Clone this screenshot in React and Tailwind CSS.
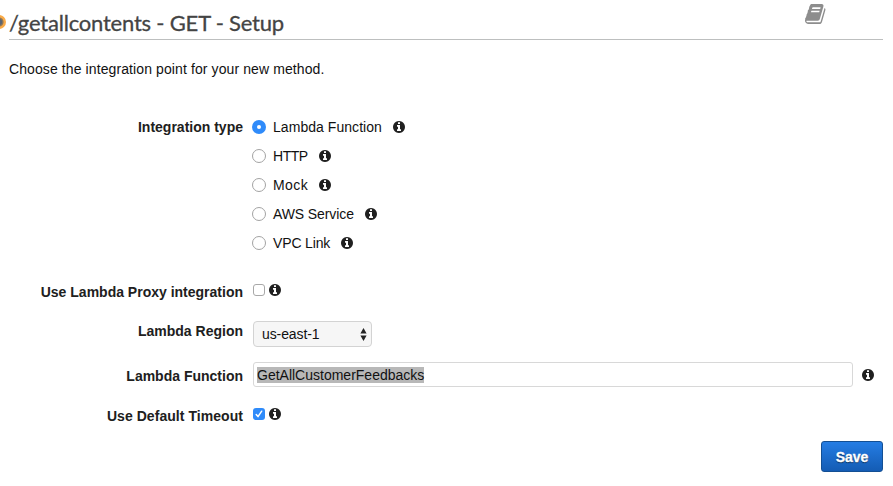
const InfoIcon = ({ className = '' }) => (
  <svg viewBox="128 128 1536 1536" className={`h-3 w-3 shrink-0 text-[#202020] ${className}`} fill="currentColor" aria-hidden="true">
    <path d="M1152 1376v-160q0-14-9-23t-23-9h-96v-512q0-14-9-23t-23-9h-320q-14 0-23 9t-9 23v160q0 14 9 23t23 9h96v320h-96q-14 0-23 9t-9 23v160q0 14 9 23t23 9h448q14 0 23-9t9-23zm-128-896v-160q0-14-9-23t-23-9h-192q-14 0-23 9t-9 23v160q0 14 9 23t23 9h192q14 0 23-9t9-23zm640 416q0 209-103 385.500t-279.500 279.500-385.500 103-385.500-103-279.500-279.500-103-385.500 103-385.500 279.500-279.500 385.500-103 385.500 103 279.500 279.500 103 385.500z" />
  </svg>
)

const BookIcon = () => (
  <svg viewBox="0 128 1792 1536" preserveAspectRatio="none" className="h-5 w-[22px]" fill="#8d8d8d" aria-hidden="true">
    <path d="M1639 478q40 57 18 129l-275 906q-19 64-76.500 107.500t-122.500 43.500h-923q-77 0-148.500-53.500t-99.500-131.500q-24-67-2-127 0-4 3-27t4-37q1-8-3-21.500t-3-19.500q2-11 8-21t16.500-23.500 16.500-23.500q23-38 45-91.500t30-91.500q3-10 .5-30t-.5-28q3-11 17-28t17-23q21-36 42-92t25-90q1-9-2.500-32t.5-28q4-13 22-30.500t22-22.500q19-26 42.500-84.500t27.500-96.500q1-8-3-25.500t-2-26.500q2-8 9-18t18-23 17-21q8-12 16.500-30.500t15-35 16-36 19.500-32 26.500-23.500 36-11.500 47.500 5.500l-1 3q38-9 51-9h761q74 0 114 56t18 130l-274 906q-36 119-71.500 153.500t-128.500 34.500h-869q-27 0-38 15-11 16-1 43 24 70 144 70h923q29 0 56-15.500t35-41.500l300-987q7-22 5-57 38 15 59 43zm-1064 2q-4 13 2 22.500t20 9.500h608q13 0 25.500-9.500t16.500-22.500l21-64q4-13-2-22.500t-20-9.500h-608q-13 0-25.500 9.500t-16.500 22.500zm-83 256q-4 13 2 22.500t20 9.500h608q13 0 25.500-9.500t16.500-22.500l21-64q4-13-2-22.500t-20-9.500h-608q-13 0-25.500 9.500t-16.500 22.500z" />
  </svg>
)

const Radio = ({ checked }) =>
  checked ? (
    <span className="flex h-3.5 w-3.5 shrink-0 items-center justify-center rounded-full bg-[#2f8bfa]">
      <span className="h-1 w-1 rounded-full bg-white" />
    </span>
  ) : (
    <span className="h-3.5 w-3.5 shrink-0 rounded-full border border-[#a3a3a3] bg-white" />
  )

const Checkbox = ({ checked }) =>
  checked ? (
    <span className="flex h-3 w-3 shrink-0 items-center justify-center rounded-[3px] bg-[#2f8bfa]">
      <svg viewBox="0 0 12 12" className="h-3 w-3" fill="none" stroke="white" strokeWidth="1.5" strokeLinecap="round" strokeLinejoin="round">
        <path d="M3.2 6.5 5 8.6 8.7 3.2" />
      </svg>
    </span>
  ) : (
    <span className="h-3 w-3 shrink-0 rounded-[3px] border border-[#a8a8a8] bg-white" />
  )

const Label = ({ children, className = '' }) => (
  <div className={`w-[243px] shrink-0 text-right font-bold whitespace-nowrap text-[#202020] ${className}`}>{children}</div>
)

const types = [
  { name: 'Lambda Function', tracking: 'tracking-[0.05px]' },
  { name: 'HTTP', tracking: 'tracking-[-0.45px]' },
  { name: 'Mock', tracking: 'tracking-[0.4px]' },
  { name: 'AWS Service', tracking: 'tracking-[-0.1px]' },
  { name: 'VPC Link', tracking: 'tracking-[-0.15px]' },
]

export default function App() {
  return (
    <div className="h-[486px] w-[893px] overflow-hidden bg-white font-['Helvetica_Neue','Liberation_Sans',Arial,sans-serif] text-[14px] leading-5 text-[#111111]">
      <header className="flex h-10">
        <svg viewBox="0 0 9 14" className="mt-[15px] h-3.5 w-[9px] shrink-0" aria-hidden="true">
          <circle cx="-1" cy="7" r="7" fill="#f9aa48" />
          <circle cx="-1" cy="7" r="4.6" fill="#8c7658" />
          <circle cx="-1" cy="7" r="3.2" fill="#596475" />
        </svg>
        <div className="flex w-[874px] justify-between border-b border-[#bdbfbf]">
          <h1 className="mt-2 font-[Lato,sans-serif] text-[22px] leading-[30px] tracking-[-0.2px] whitespace-nowrap text-[#444444] [-webkit-text-stroke:0.3px_#444444]">
            /getallcontents - GET - Setup
          </h1>
          <div className="mt-1 mr-[56px]"><BookIcon /></div>
        </div>
      </header>
      <p className="mt-[19px] ml-[9px] tracking-[0.1px]">Choose the integration point for your new method.</p>

      <div className="mt-[33px] flex">
        <Label className="mt-[5px]">Integration type</Label>
        <div className="ml-[9px] flex flex-col">
          {types.map(({ name, tracking }, i) => (
            <label key={name} className="flex h-[29px] items-center">
              <Radio checked={i === 0} />
              <span className={`ml-[7px] whitespace-nowrap ${tracking}`}>{name}</span>
              <InfoIcon className="ml-[11px]" />
            </label>
          ))}
        </div>
      </div>

      <div className="mt-[25px] flex h-5">
        <Label>Use Lambda Proxy integration</Label>
        <div className="mt-[2px] ml-[10px] flex gap-1">
          <Checkbox />
          <InfoIcon />
        </div>
      </div>

      <div className="mt-[19px] flex h-[26px]">
        <Label>Lambda Region</Label>
        <div className="ml-[10px] flex w-[119px] items-center justify-between rounded border border-[#d3d3d3] bg-[#f6f6f6] pr-1 pl-2">
          <span className="tracking-[-0.1px]">us-east-1</span>
          <svg viewBox="0 0 7 13" className="h-[13px] w-[7px]" fill="#222">
            <path d="M3.500 0 6.600 5.400H.4zM3.500 13 6.600 7.600H.4z" />
          </svg>
        </div>
      </div>

      <div className="mt-[15px] flex h-[25px]">
        <Label className="mt-1">Lambda Function</Label>
        <div className="ml-[10px] flex w-[600px] items-center rounded-[3px] border border-[#d8d8d8] bg-white pl-[3px]">
          <span className="h-4 bg-[#b8b8b8] leading-4">GetAllCustomerFeedbacks</span>
        </div>
        <InfoIcon className="mt-[7px] ml-[9px]" />
      </div>

      <div className="mt-[19px] flex h-5">
        <Label className="tracking-[0.05px]">Use Default Timeout</Label>
        <div className="mt-[2px] ml-[10px] flex gap-1">
          <Checkbox checked />
          <InfoIcon />
        </div>
      </div>

      <div className="mt-[15px] flex justify-end pr-[10px]">
        <button className="h-[31px] w-[62px] rounded-[3px] border border-[#134f94] bg-gradient-to-b from-[#257de4] to-[#145cb4] text-[14px] font-bold text-white [-webkit-text-stroke:0.3px_white] [text-shadow:0_1px_1px_#00000099]">
          Save
        </button>
      </div>
    </div>
  )
}
